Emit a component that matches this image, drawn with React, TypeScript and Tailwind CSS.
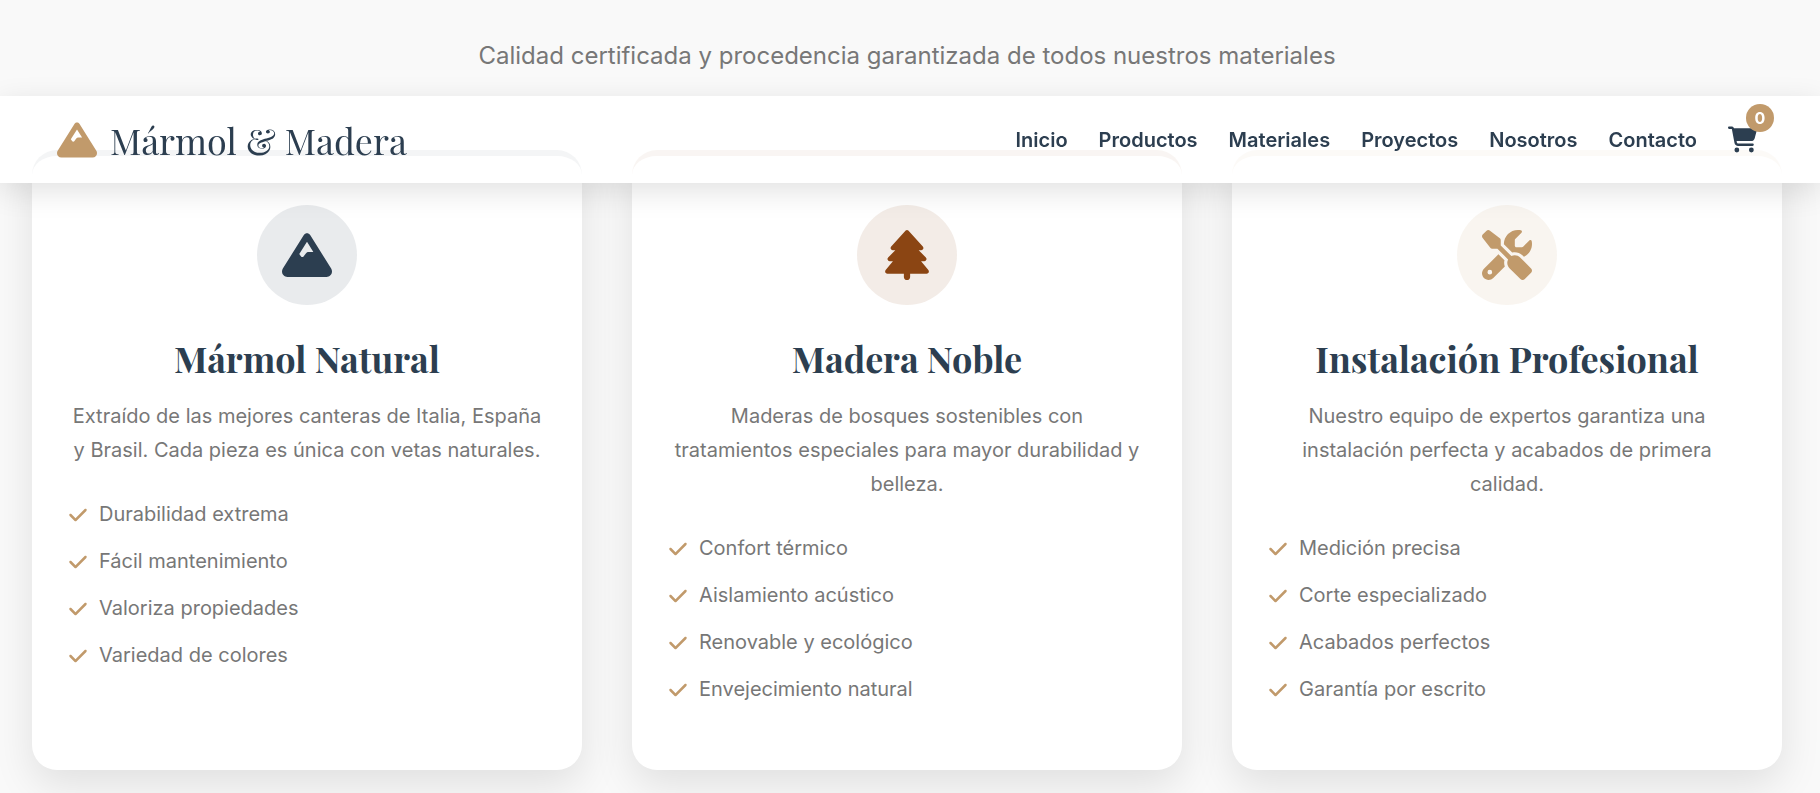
import { FaCartShopping, FaCheck, FaMountain, FaScrewdriverWrench, FaTree } from 'react-icons/fa6';
import type { IconType } from 'react-icons';

interface Material {
  title: string;
  text: string;
  features: string[];
  icon: IconType;
  border: string;
  badge: string;
}

const NAV_LINKS = ['Inicio', 'Productos', 'Materiales', 'Proyectos', 'Nosotros', 'Contacto'];

const MATERIALS: Material[] = [
  {
    title: 'Mármol Natural',
    text: 'Extraído de las mejores canteras de Italia, España y Brasil. Cada pieza es única con vetas naturales.',
    features: ['Durabilidad extrema', 'Fácil mantenimiento', 'Valoriza propiedades', 'Variedad de colores'],
    icon: FaMountain,
    border: 'border-[#2c3e50]',
    badge: 'bg-[#2c3e50]/10 text-[#2c3e50]',
  },
  {
    title: 'Madera Noble',
    text: 'Maderas de bosques sostenibles con tratamientos especiales para mayor durabilidad y belleza.',
    features: ['Confort térmico', 'Aislamiento acústico', 'Renovable y ecológico', 'Envejecimiento natural'],
    icon: FaTree,
    border: 'border-[#8b4513]',
    badge: 'bg-[#8b4513]/10 text-[#8b4513]',
  },
  {
    title: 'Instalación Profesional',
    text: 'Nuestro equipo de expertos garantiza una instalación perfecta y acabados de primera calidad.',
    features: ['Medición precisa', 'Corte especializado', 'Acabados perfectos', 'Garantía por escrito'],
    icon: FaScrewdriverWrench,
    border: 'border-[#c19a6b]',
    badge: 'bg-[#c19a6b]/10 text-[#c19a6b]',
  },
];

function Header() {
  return (
    <header className="fixed inset-x-0 top-24 z-10 flex h-[87px] items-center justify-between bg-white/95 pr-[63px] pl-[57px] shadow-[0_8px_30px_rgba(0,0,0,0.12)]">
      <a href="#inicio" className="flex items-center gap-[13px] font-['Playfair_Display','Liberation_Serif',serif] text-4xl text-[#2c3e50]">
        <FaMountain className="size-10 text-[#c19a6b]" />
        Mármol &amp; Madera
      </a>
      <nav className="flex items-center gap-[31px]">
        {NAV_LINKS.map((link) => (
          <a key={link} href={`#${link.toLowerCase()}`} className="text-[20px] font-semibold text-[#2c3e50]">
            {link}
          </a>
        ))}
        <button type="button" aria-label="Carrito" className="relative text-[29px] text-[#2c3e50]">
          <FaCartShopping />
          <span className="absolute -top-[21px] -right-[17px] flex size-7 items-center justify-center rounded-full bg-[#c19a6b] text-base font-bold text-white">
            0
          </span>
        </button>
      </nav>
    </header>
  );
}

function MaterialCard({ title, text, features, icon: Icon, border, badge }: Material) {
  return (
    <article className={`rounded-[25px] border-t-[6px] bg-white px-9 pt-[49px] pb-[57px] shadow-[0_15px_40px_rgba(0,0,0,0.1)] ${border}`}>
      <div className={`mx-auto flex size-[100px] items-center justify-center rounded-full text-[50px] ${badge}`}>
        <Icon />
      </div>
      <h3 className="mt-7 text-center font-['Playfair_Display','Liberation_Serif',serif] text-4xl leading-[50px] font-bold text-[#2c3e50]">
        {title}
      </h3>
      <p className="mt-4 px-0.5 text-center text-[20px] leading-[34px] text-[#777777]">{text}</p>
      <ul className="mt-6">
        {features.map((feature) => (
          <li key={feature} className="flex items-center gap-[11px] py-[6px] text-[20px] leading-[35px] text-[#777777]">
            <FaCheck className="text-[#c19a6b]" />
            {feature}
          </li>
        ))}
      </ul>
    </article>
  );
}

export default function App() {
  return (
    <div className="h-screen overflow-hidden bg-[#f9f9f9] font-['Inter',sans-serif]">
      <Header />
      <main className="pr-[38px] pl-8">
        <p className="pt-9 text-center text-[24px] leading-10 text-[#777777]">
          Calidad certificada y procedencia garantizada de todos nuestros materiales
        </p>
        <div className="mt-[74px] grid grid-cols-3 gap-[50px]">
          {MATERIALS.map((material) => (
            <MaterialCard key={material.title} {...material} />
          ))}
        </div>
      </main>
    </div>
  );
}
